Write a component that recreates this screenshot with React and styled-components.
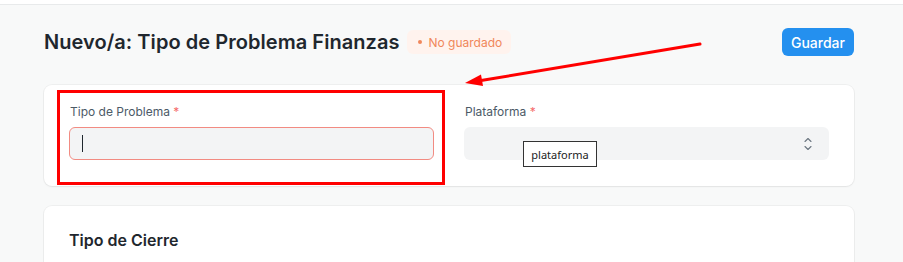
import React from "react";
import styled, { createGlobalStyle } from "styled-components";

const Global = createGlobalStyle`
  html, body { margin: 0; padding: 0; }
  body {
    background: #f8f9f9;
    font-family: Inter, "Noto Sans", sans-serif;
    color: #1f272e;
    -webkit-font-smoothing: antialiased;
  }
  * { box-sizing: border-box; }
`;

const Page = styled.div`
  position: relative;
  width: 903px;
  height: 262px;
  overflow: hidden;
`;

const NavBar = styled.div`
  height: 5px;
  background: #ffffff;
  border-bottom: 1px solid #e8eaeb;
`;

const Content = styled.div`
  width: 810px;
  margin-left: 44px;
  display: flex;
  flex-direction: column;
`;

const Header = styled.div`
  height: 80px;
  display: flex;
  align-items: center;
  padding-bottom: 7px;
  padding-top: 1px;
`;

const Title = styled.h1`
  margin: 0;
  font-size: 20px;
  font-weight: 600;
  letter-spacing: 0.05px;
  color: #1f272e;
`;

const Badge = styled.span`
  margin-left: 8px;
  height: 24px;
  padding: 0 9px 0 11px;
  border-radius: 6px;
  background: #fff3ee;
  color: #f0875b;
  font-size: 12px;
  display: inline-flex;
  align-items: center;
  gap: 6px;
  &::before {
    content: "";
    width: 4px;
    height: 4px;
    border-radius: 50%;
    background: #f0875b;
  }
`;

const Spacer = styled.div`
  flex: 1;
`;

const PrimaryButton = styled.button`
  height: 28px;
  padding: 0 9px;
  border: none;
  border-radius: 6px;
  background: #2490ef;
  color: #ffffff;
  font-family: inherit;
  font-size: 14px;
  font-weight: 500;
`;

const Card = styled.section`
  background: #ffffff;
  border-radius: 8px;
  box-shadow: 0 0 0 1px rgba(0, 0, 0, 0.04), 0 1px 2px rgba(0, 0, 0, 0.05);
  padding: ${(p) => p.$pad};
  margin-bottom: ${(p) => p.$mb || "0"};
`;

const Grid = styled.div`
  display: grid;
  grid-template-columns: 365px 365px;
  column-gap: 30px;
`;

const Field = styled.div`
  display: flex;
  flex-direction: column;
`;

const Label = styled.label`
  font-size: 12px;
  line-height: 16px;
  color: #4c5a67;
  margin-bottom: 7px;
  margin-left: 1px;
  & > span {
    color: #f56b6b;
  }
`;

const InputBox = styled.div`
  position: relative;
  height: 33px;
  border-radius: 6px;
  background: #f3f4f5;
  border: 1px solid ${(p) => (p.$error ? "#f28b82" : "transparent")};
  display: flex;
  align-items: center;
  padding: 0 12px;
`;

const Caret = styled.div`
  width: 1px;
  height: 17px;
  background: #1f272e;
`;

const Chevrons = styled.svg`
  position: absolute;
  right: 16px;
  top: 9px;
`;

const SectionTitle = styled.h2`
  margin: 0;
  font-size: 16px;
  font-weight: 600;
  color: #1f272e;
`;

/* annotation overlays */
const RedBox = styled.div`
  position: absolute;
  left: 57px;
  top: 90px;
  width: 388px;
  height: 95px;
  border: 3px solid #ff0000;
`;

const Tooltip = styled.div`
  position: absolute;
  left: 523px;
  top: 141px;
  width: 74px;
  height: 26px;
  background: #ffffff;
  border: 1px solid #333333;
  font-family: "Noto Sans", sans-serif;
  font-size: 11px;
  color: #222;
  display: flex;
  align-items: center;
  justify-content: center;
  padding-top: 1px;
`;

const ArrowSvg = styled.svg`
  position: absolute;
  left: 0;
  top: 0;
`;

export default function App() {
  return (
    <>
      <Global />
      <Page>
        <NavBar />
        <Content>
          <Header>
            <Title>Nuevo/a: Tipo de Problema Finanzas</Title>
            <Badge>No guardado</Badge>
            <Spacer />
            <PrimaryButton>Guardar</PrimaryButton>
          </Header>
          <Card $pad="19px 24px 26px 25px" $mb="20px">
            <Grid>
              <Field>
                <Label>
                  Tipo de Problema <span>*</span>
                </Label>
                <InputBox $error>
                  <Caret />
                </InputBox>
              </Field>
              <Field>
                <Label>
                  Plataforma <span>*</span>
                </Label>
                <InputBox>
                  <Chevrons width="8" height="14" viewBox="0 0 8 14" fill="none">
                    <path d="M1 4.5 L4 1.5 L7 4.5" stroke="#6b7680" strokeWidth="1.1" strokeLinecap="round" strokeLinejoin="round" />
                    <path d="M1 9.5 L4 12.5 L7 9.5" stroke="#6b7680" strokeWidth="1.1" strokeLinecap="round" strokeLinejoin="round" />
                  </Chevrons>
                </InputBox>
              </Field>
            </Grid>
          </Card>
          <Card $pad="24px 25px 40px 25px">
            <SectionTitle>Tipo de Cierre</SectionTitle>
          </Card>
        </Content>
        <RedBox />
        <Tooltip>plataforma</Tooltip>
        <ArrowSvg width="903" height="262" viewBox="0 0 903 262">
          <line x1="700" y1="44" x2="478" y2="81" stroke="#ff0000" strokeWidth="3" strokeLinecap="round" />
          <polygon points="465,83 481,74.5 483,86" fill="#ff0000" />
        </ArrowSvg>
      </Page>
    </>
  );
}
